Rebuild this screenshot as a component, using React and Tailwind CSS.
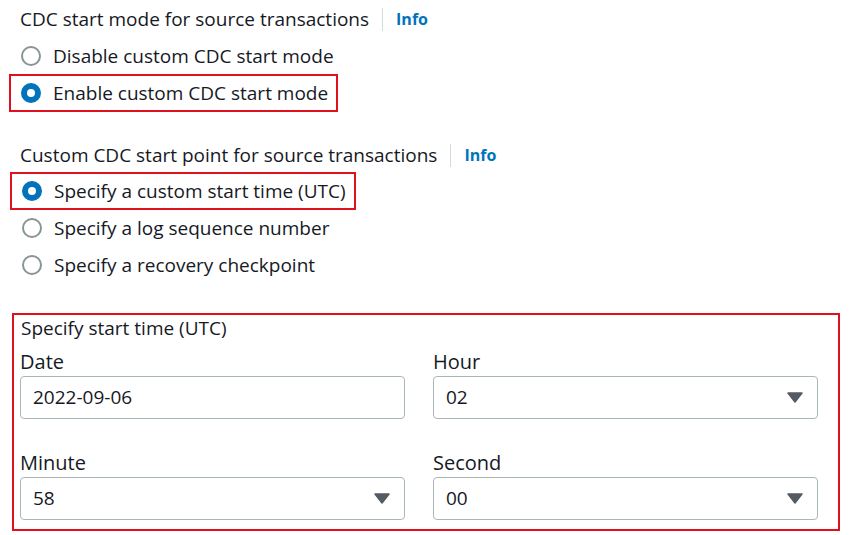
import React from 'react';

const font = { fontFamily: '"Open Sans", "Noto Sans", Arial, sans-serif' };

const Radio = ({ checked }) => (
  <span
    className={`inline-block w-[20px] h-[20px] rounded-full shrink-0 bg-white ${
      checked ? 'border-[6px] border-[#0073bb]' : 'border-2 border-[#879596]'
    }`}
  />
);

const Option = ({ label, checked, highlight }) => (
  <div
    className={`inline-flex items-center gap-[12px] h-[38px] pl-[10px] pr-[8px] border-2 ${
      highlight ? 'border-[#e0101e]' : 'border-transparent'
    }`}
  >
    <Radio checked={checked} />
    <span className="text-[19px] text-[#16191f] leading-none">{label}</span>
  </div>
);

const Heading = ({ children }) => (
  <div className="flex items-center h-[24px] pl-[20px]">
    <span className="text-[19px] text-[#16191f]">{children}</span>
    <span className="ml-[13px] mr-[13px] w-px h-[23px] bg-[#d5dbdb]" />
    <a className="text-[16px] font-bold text-[#0073bb]">Info</a>
  </div>
);

const Field = ({ label, value, select }) => (
  <div className="flex flex-col">
    <div className="text-[20px] text-[#16191f] leading-[26px] mb-[1px]">{label}</div>
    <div className="flex items-center justify-between h-[43px] px-[12px] border border-[#aab7b8] rounded-[4px] bg-white">
      <span className="text-[19px] text-[#16191f]">{value}</span>
      {select && (
        <svg width="16" height="11" viewBox="0 0 16 11" className="mr-[2px]">
          <path d="M1 1 L15 1 L8 10 Z" fill="#545b64" stroke="#545b64" strokeWidth="1.5" strokeLinejoin="round" />
        </svg>
      )}
    </div>
  </div>
);

export default function App() {
  return (
    <div className="w-[854px] h-[535px] bg-white overflow-hidden" style={font}>
      <div className="pt-[7px]">
        <Heading>CDC start mode for source transactions</Heading>
        <div className="flex flex-col pl-[9px] mt-[6px]">
          <div><Option label="Disable custom CDC start mode" /></div>
          <div className="-mt-px"><Option label="Enable custom CDC start mode" checked highlight /></div>
        </div>

        <div className="mt-[31px]">
          <Heading>Custom CDC start point for source transactions</Heading>
        </div>
        <div className="flex flex-col pl-[10px] mt-[5px]">
          <div><Option label="Specify a custom start time (UTC)" checked highlight /></div>
          <div className="-mt-px"><Option label="Specify a log sequence number" /></div>
          <div className="-mt-px"><Option label="Specify a recovery checkpoint" /></div>
        </div>

        <div className="ml-[12px] mt-[29px] w-[828px] h-[218px] border-2 border-[#e0101e] pl-[6px] pr-[20px]">
          <div className="text-[19px] text-[#16191f] leading-[26px] pl-[1px]">Specify start time (UTC)</div>
          <div className="grid grid-cols-2 gap-x-[28px] gap-y-[31px] mt-[8px]">
            <Field label="Date" value="2022-09-06" />
            <Field label="Hour" value="02" select />
            <Field label="Minute" value="58" select />
            <Field label="Second" value="00" select />
          </div>
        </div>
      </div>
    </div>
  );
}
